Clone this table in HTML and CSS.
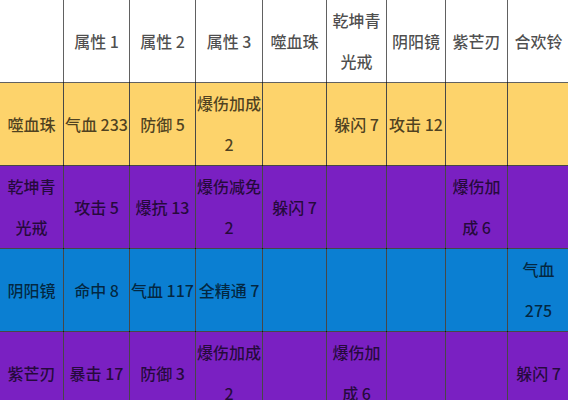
FILE: index.html
```html
<!DOCTYPE html>
<html lang="zh">
<head>
<meta charset="utf-8">
<title>Table</title>
<link rel="stylesheet" href="styles.css">
</head>
<body>
<div class="wrap">
<table class="grid">
  <colgroup>
    <col class="c0"><col class="c1"><col class="c2"><col class="c3"><col class="c4"><col class="c5"><col class="c6"><col class="c7"><col class="c8">
  </colgroup>
  <tr class="head">
    <td></td><td>属性 1</td><td>属性 2</td><td>属性 3</td><td>噬血珠</td><td>乾坤青光戒</td><td>阴阳镜</td><td>紫芒刃</td><td>合欢铃</td>
  </tr>
  <tr class="yellow">
    <td>噬血珠</td><td>气血 233</td><td>防御 5</td><td>爆伤加成 2</td><td></td><td>躲闪 7</td><td>攻击 12</td><td></td><td></td>
  </tr>
  <tr class="purple">
    <td>乾坤青光戒</td><td>攻击 5</td><td>爆抗 13</td><td>爆伤减免 2</td><td>躲闪 7</td><td></td><td></td><td>爆伤加成 6</td><td></td>
  </tr>
  <tr class="blue">
    <td>阴阳镜</td><td>命中 8</td><td>气血 117</td><td class="lit">全精通 7</td><td></td><td></td><td></td><td></td><td>气血 275</td>
  </tr>
  <tr class="purple">
    <td>紫芒刃</td><td>暴击 17</td><td>防御 3</td><td>爆伤加成 2</td><td></td><td>爆伤加成 6</td><td></td><td></td><td>躲闪 7</td>
  </tr>
</table>
</div>
</body>
</html>
```
FILE: styles.css
```css
html, body {
  margin: 0;
  padding: 0;
  background: #ffffff;
  overflow: hidden;
}
.wrap {
  width: 568px;
  height: 400px;
  overflow: hidden;
}
.grid {
  border-collapse: collapse;
  table-layout: fixed;
  width: 570px;
  margin: -1px 0 0 -1px;
  font-family: "Noto Sans CJK SC", "Noto Sans", sans-serif;
  font-size: 16px;
  font-weight: 500;
  color: rgba(0, 0, 0, 0.7);
}
.c0 { width: 64px; }
.c1 { width: 66px; }
.c2 { width: 66px; }
.c3 { width: 67px; }
.c4 { width: 64px; }
.c5 { width: 60px; }
.c6 { width: 59px; }
.c7 { width: 62px; }
.c8 { width: 62px; }
.grid td {
  border: 1px solid rgba(0, 0, 0, 0.72);
  height: 82px;
  padding: 0 1px;
  line-height: 41px;
  text-align: center;
  vertical-align: middle;
  overflow: hidden;
}
.head td {
  background: #ffffff;
  border-color: rgba(0, 0, 0, 0.62);
}
.yellow td { background: #fdd36b; }
.purple td { background: #7a20c2; }
.blue td { background: #0b7fd2; }
.blue td.lit { border-top-color: #f3e6ff; }
```
